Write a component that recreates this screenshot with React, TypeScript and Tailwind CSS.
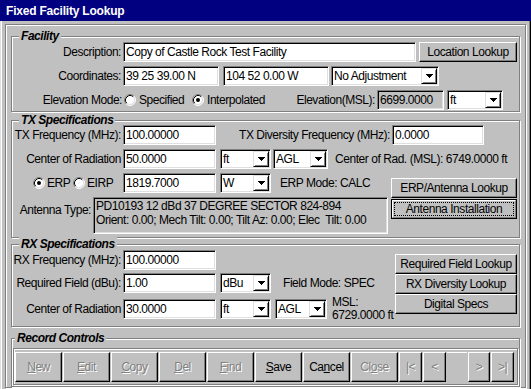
import React from "react";

const sunken =
  "border border-t-[#808080] border-l-[#808080] border-r-white border-b-white shadow-[inset_1px_1px_0_#000,inset_-1px_-1px_0_#dfdfdf]";
const raised =
  "border border-t-white border-l-white border-r-black border-b-black shadow-[inset_-1px_-1px_0_#808080]";
const etched = "border border-[#808080] shadow-[inset_1px_1px_0_#fff,1px_1px_0_#fff]";

type Kids = { children?: React.ReactNode; className?: string };

function Field({ children, className = "", gray = false }: Kids & { gray?: boolean }) {
  return (
    <div
      className={`h-[20px] shrink-0 ${sunken} ${gray ? "bg-[#c0c0c0]" : "bg-white"} flex items-center pl-[2px] whitespace-nowrap overflow-hidden ${className}`}
    >
      {children}
    </div>
  );
}

function Select({ value, className = "" }: { value: string; className?: string }) {
  return (
    <div className={`h-[20px] shrink-0 ${sunken} bg-white p-[1px] flex ${className}`}>
      <div className="flex-1 flex items-center pl-[1px] whitespace-nowrap overflow-hidden">{value}</div>
      <div className="w-[16px] h-full border border-t-[#dfdfdf] border-l-[#dfdfdf] border-r-black border-b-black shadow-[inset_1px_1px_0_#fff,inset_-1px_-1px_0_#808080] flex items-center justify-center">
        <svg width="7" height="4" viewBox="0 0 7 4" shapeRendering="crispEdges">
          <path d="M0 0H7L3.5 4Z" fill="#000" />
        </svg>
      </div>
    </div>
  );
}

function Label({ children, className = "w-[111px]" }: Kids) {
  return <div className={`shrink-0 text-right pr-[2px] whitespace-nowrap ${className}`}>{children}</div>;
}

function Btn({ children, className = "", disabled = false }: Kids & { disabled?: boolean }) {
  return (
    <div
      className={`${raised} shrink-0 flex items-center justify-center whitespace-nowrap ${
        disabled ? "text-[#808080] [text-shadow:1px_1px_0_#fff]" : ""
      } ${className}`}
    >
      {children}
    </div>
  );
}

function Radio({ checked = false, className = "" }: { checked?: boolean; className?: string }) {
  return (
    <svg width="12" height="12" viewBox="0 0 12 12" className={`shrink-0 ${className}`}>
      <circle cx="6" cy="6" r="5" fill="#fff" />
      <path d="M2.11 9.89A5.5 5.5 0 0 1 9.89 2.11" stroke="#808080" fill="none" />
      <path d="M9.89 2.11A5.5 5.5 0 0 1 2.11 9.89" stroke="#fff" fill="none" />
      <path d="M2.82 9.18A4.5 4.5 0 0 1 9.18 2.82" stroke="#000" fill="none" />
      <path d="M9.18 2.82A4.5 4.5 0 0 1 2.82 9.18" stroke="#dfdfdf" fill="none" />
      {checked && <circle cx="6" cy="6" r="2" fill="#000" />}
    </svg>
  );
}

function Group({ title, className = "", left = "left-[7px]", children }: Kids & { title: string; left?: string }) {
  return (
    <div className={`relative shrink-0 ${etched} ${className}`}>
      <span
        className={`absolute ${left} top-[-8px] bg-[#c0c0c0] px-[2px] font-bold italic text-[12px] leading-[15px]`}
      >
        {title}
      </span>
      {children}
    </div>
  );
}

export default function App() {
  return (
    <div className="w-[531px] h-[389px] bg-[#c0c0c0] flex flex-col overflow-hidden font-['Liberation_Sans',Arial,sans-serif] text-[12px] tracking-[-0.45px] text-black">
      {/* title bar */}
      <div className="h-[21px] shrink-0 bg-[#000080] text-white font-bold tracking-[-0.2px] flex items-center pl-[6px] pt-[1px]">
        Fixed Facility Lookup
      </div>

      <div className="flex-1 flex border-x border-b border-l-[#dfdfdf] border-r-black border-b-black">
        <div className="flex-1 flex border-x border-b border-l-white border-r-[#808080] border-b-[#808080] p-[3px]">
          <div className={`flex-1 flex flex-col ${etched} pl-[5px] pr-[5px] pt-[11px]`}>
            {/* Facility */}
            <Group title="Facility" className="pt-[5px] pb-[1px] pr-[2px] flex flex-col gap-[4px]">
              <div className="flex items-center">
                <Label>Description:</Label>
                <Field className="w-[293px]">Copy of Castle Rock Test Facility</Field>
                <Btn className="ml-[3px] w-[98px] h-[20px]">Location Lookup</Btn>
              </div>
              <div className="flex items-center">
                <Label>Coordinates:</Label>
                <Field className="w-[96px]">39 25 39.00 N</Field>
                <Field className="w-[106px] ml-[4px]">104 52 0.00 W</Field>
                <Select className="w-[108px] ml-[2px]" value="No Adjustment" />
              </div>
              <div className="flex items-center">
                <Label className="w-[112px]">Elevation Mode:</Label>
                <Radio />
                <span className="ml-[3px] w-[50px]">Specified</span>
                <Radio checked className="ml-[3px]" />
                <span className="ml-[3px]">Interpolated</span>
                <span className="ml-auto mr-[2px]">Elevation(MSL):</span>
                <Field gray className="w-[67px]">6699.0000</Field>
                <Select className="w-[56px] ml-[3px] mr-[14px]" value="ft" />
              </div>
            </Group>

            {/* TX */}
            <Group title="TX Specifications" className="mt-[8px] pt-[4px] pb-[3px] pr-[2px] flex flex-col gap-[4px]">
              <div className="flex items-center">
                <Label>TX Frequency (MHz):</Label>
                <Field className="w-[93px]">100.00000</Field>
                <Label className="w-[176px]">TX Diversity Frequency (MHz):</Label>
                <Field className="w-[92px]">0.0000</Field>
              </div>
              <div className="flex items-center">
                <Label>Center of Radiation</Label>
                <Field className="w-[93px]">50.0000</Field>
                <Select className="w-[51px] ml-[4px]" value="ft" />
                <Select className="w-[55px] ml-[2px]" value="AGL" />
                <span className="ml-[7px] whitespace-nowrap">Center of Rad. (MSL): 6749.0000 ft</span>
              </div>
              <div className="flex">
                <div className="w-[376px] flex flex-col gap-[4px]">
                  <div className="flex items-center">
                    <div className="w-[111px] shrink-0 flex items-center pl-[21px]">
                      <Radio checked />
                      <span className="ml-[2px] w-[25px]">ERP</span>
                      <Radio className="ml-[1px]" />
                      <span className="ml-[2px]">EIRP</span>
                    </div>
                    <Field className="w-[93px]">1819.7000</Field>
                    <Select className="w-[51px] ml-[4px]" value="W" />
                    <span className="ml-[9px] whitespace-nowrap">ERP Mode: CALC</span>
                  </div>
                  <div className="flex items-start">
                    <Label className="w-[81px] pt-[6px] leading-[14px]">Antenna Type:</Label>
                    <div className={`w-[295px] h-[37px] ${sunken} bg-[#c0c0c0] pl-[2px] pt-[1px] leading-[14px] whitespace-pre`}>
                      {"PD10193 12 dBd 37 DEGREE SECTOR 824-894\nOrient: 0.00; Mech Tilt: 0.00; Tilt Az: 0.00; Elec  Tilt: 0.00"}
                    </div>
                  </div>
                </div>
                <div className="ml-[3px] mt-[5px] w-[126px] flex flex-col gap-[1px]">
                  <Btn className="h-[20px]">ERP/Antenna Lookup</Btn>
                  <div className="h-[20px] border border-black flex">
                    <div className="flex-1 flex border border-t-white border-l-white border-r-[#808080] border-b-[#808080] p-[1px]">
                      <div className="flex-1 border border-dotted border-black flex items-center justify-center whitespace-nowrap">
                        Antenna Installation
                      </div>
                    </div>
                  </div>
                </div>
              </div>
            </Group>

            {/* RX */}
            <Group title="RX Specifications" className="mt-[6px] pt-[5px] pb-[4px] pr-[2px] flex">
              <div className="flex-1 flex flex-col gap-[3px]">
                <div className="flex items-center">
                  <Label>RX Frequency (MHz):</Label>
                  <Field className="w-[93px]">100.00000</Field>
                </div>
                <div className="flex items-center">
                  <Label>Required Field (dBu):</Label>
                  <Field className="w-[93px]">1.00</Field>
                  <Select className="w-[51px] ml-[4px]" value="dBu" />
                  <span className="ml-[12px] whitespace-nowrap">Field Mode: SPEC</span>
                </div>
                <div className="flex items-center">
                  <Label>Center of Radiation</Label>
                  <Field className="w-[93px]">30.0000</Field>
                  <Select className="w-[51px] ml-[4px]" value="ft" />
                  <Select className="w-[52px] ml-[4px]" value="AGL" />
                  <div className="ml-[5px] leading-[13px] whitespace-nowrap">
                    <div>MSL:</div>
                    <div>6729.0000 ft</div>
                  </div>
                </div>
              </div>
              <div className="w-[122px] mt-[4px] flex flex-col">
                <Btn className="h-[20px]">Required Field Lookup</Btn>
                <Btn className="h-[20px]">RX Diversity Lookup</Btn>
                <Btn className="h-[20px]">Digital Specs</Btn>
              </div>
            </Group>

            {/* Record controls */}
            <Group title="Record Controls" left="left-[3px]" className="mt-[11px] pt-[9px] pb-[1px] px-[1px]">
              <div className={`${etched} pl-[1px] pr-[2px] pt-[3px] pb-[2px] flex gap-[1px]`}>
                <Btn disabled className="w-[47px] h-[30px]"><span className="underline">N</span>ew</Btn>
                <Btn disabled className="w-[47px] h-[30px]"><span className="underline">E</span>dit</Btn>
                <Btn disabled className="w-[47px] h-[30px]"><span className="underline">C</span>opy</Btn>
                <Btn disabled className="w-[47px] h-[30px]"><span className="underline">D</span>el</Btn>
                <Btn disabled className="w-[47px] h-[30px]"><span className="underline">F</span>ind</Btn>
                <Btn className="w-[47px] h-[30px]"><span className="underline">S</span>ave</Btn>
                <Btn className="w-[47px] h-[30px]">Ca<span className="underline">n</span>cel</Btn>
                <Btn disabled className="w-[47px] h-[30px]">Cl<span className="underline">o</span>se</Btn>
                <Btn disabled className="w-[23px] h-[30px]">|&lt;</Btn>
                <Btn disabled className="w-[23px] h-[30px]">&lt;</Btn>
                <div className="w-[20px] h-[30px] shrink-0 border-t border-white" />
                <Btn disabled className="w-[22px] h-[30px]">&gt;</Btn>
                <Btn disabled className="w-[23px] h-[30px]">&gt;|</Btn>
              </div>
            </Group>
          </div>
        </div>
      </div>
    </div>
  );
}
